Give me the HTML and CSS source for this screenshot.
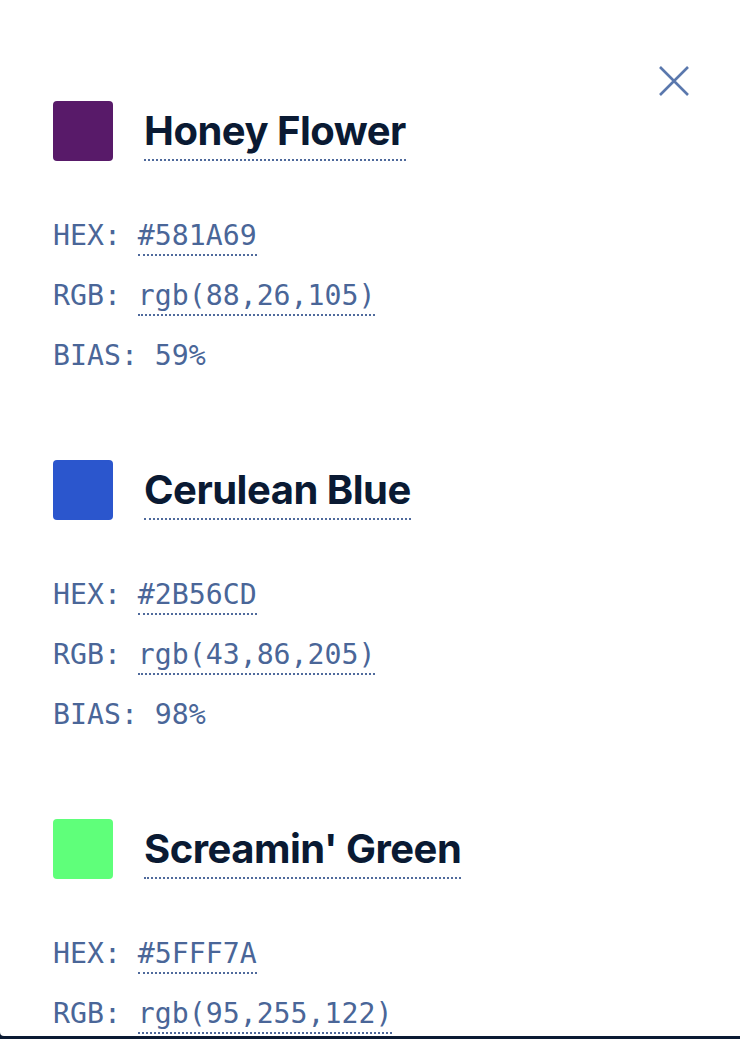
FILE: index.html
```html
<!DOCTYPE html>
<html lang="en">
<head>
  <meta charset="UTF-8">
  <meta name="viewport" content="width=device-width, initial-scale=1.0">
  <title>Palette</title>
  <link rel="stylesheet" href="styles.css">
</head>
<body>
  <div class="panel">
    <button class="close" aria-label="Close">
      <svg width="32" height="32" viewBox="0 0 32 32"><path d="M2 2 L30 30 M30 2 L2 30" stroke="#5a78ad" stroke-width="2.6" fill="none"/></svg>
    </button>

    <div class="color">
      <div class="color-head">
        <span class="swatch" style="background:#581A69"></span>
        <h2 class="name">Honey Flower</h2>
      </div>
      <div class="details">
        <div class="row">HEX: <span class="val">#581A69</span></div>
        <div class="row">RGB: <span class="val">rgb(88,26,105)</span></div>
        <div class="row">BIAS: 59%</div>
      </div>
    </div>

    <div class="color">
      <div class="color-head">
        <span class="swatch" style="background:#2B56CD"></span>
        <h2 class="name">Cerulean Blue</h2>
      </div>
      <div class="details">
        <div class="row">HEX: <span class="val">#2B56CD</span></div>
        <div class="row">RGB: <span class="val">rgb(43,86,205)</span></div>
        <div class="row">BIAS: 98%</div>
      </div>
    </div>

    <div class="color">
      <div class="color-head">
        <span class="swatch" style="background:#5FFF7A"></span>
        <h2 class="name">Screamin' Green</h2>
      </div>
      <div class="details">
        <div class="row">HEX: <span class="val">#5FFF7A</span></div>
        <div class="row">RGB: <span class="val">rgb(95,255,122)</span></div>
        <div class="row">BIAS: 94%</div>
      </div>
    </div>
  </div>
</body>
</html>
```

FILE: styles.css
```css
* {
  box-sizing: border-box;
}

body {
  margin: 0;
  background: #0b1a33;
  height: 1039px;
  overflow: hidden;
}

.panel {
  position: relative;
  background: #fff;
  height: 1036px;
  padding: 101px 0 0 53px;
  border-radius: 0 0 0 4px;
  overflow: hidden;
}

.close {
  position: absolute;
  top: 65px;
  right: 50px;
  background: none;
  border: none;
  padding: 0;
  cursor: pointer;
}

.close svg {
  display: block;
}

.color {
  margin-bottom: 87px;
}

.color-head {
  display: flex;
  align-items: flex-start;
  gap: 31px;
}

.swatch {
  width: 60px;
  height: 60px;
  border-radius: 4px;
  flex: none;
}

.name {
  margin: 0;
  font-family: Inter, "Noto Sans", sans-serif;
  font-weight: 700;
  font-size: 40px;
  letter-spacing: -0.5px;
  line-height: 44px;
  color: #0a1a33;
  padding-top: 8px;
  padding-bottom: 6px;
  border-bottom: 2px dotted #4f6a9c;
}

.details {
  margin-top: 58px;
  display: flex;
  flex-direction: column;
  gap: 26px;
}

.row {
  font-family: "DejaVu Sans Mono", "Liberation Mono", monospace;
  font-size: 28.2px;
  line-height: 34px;
  color: #4a6698;
}

.val {
  border-bottom: 2px dotted #4f6a9c;
  padding-bottom: 2px;
}
```
